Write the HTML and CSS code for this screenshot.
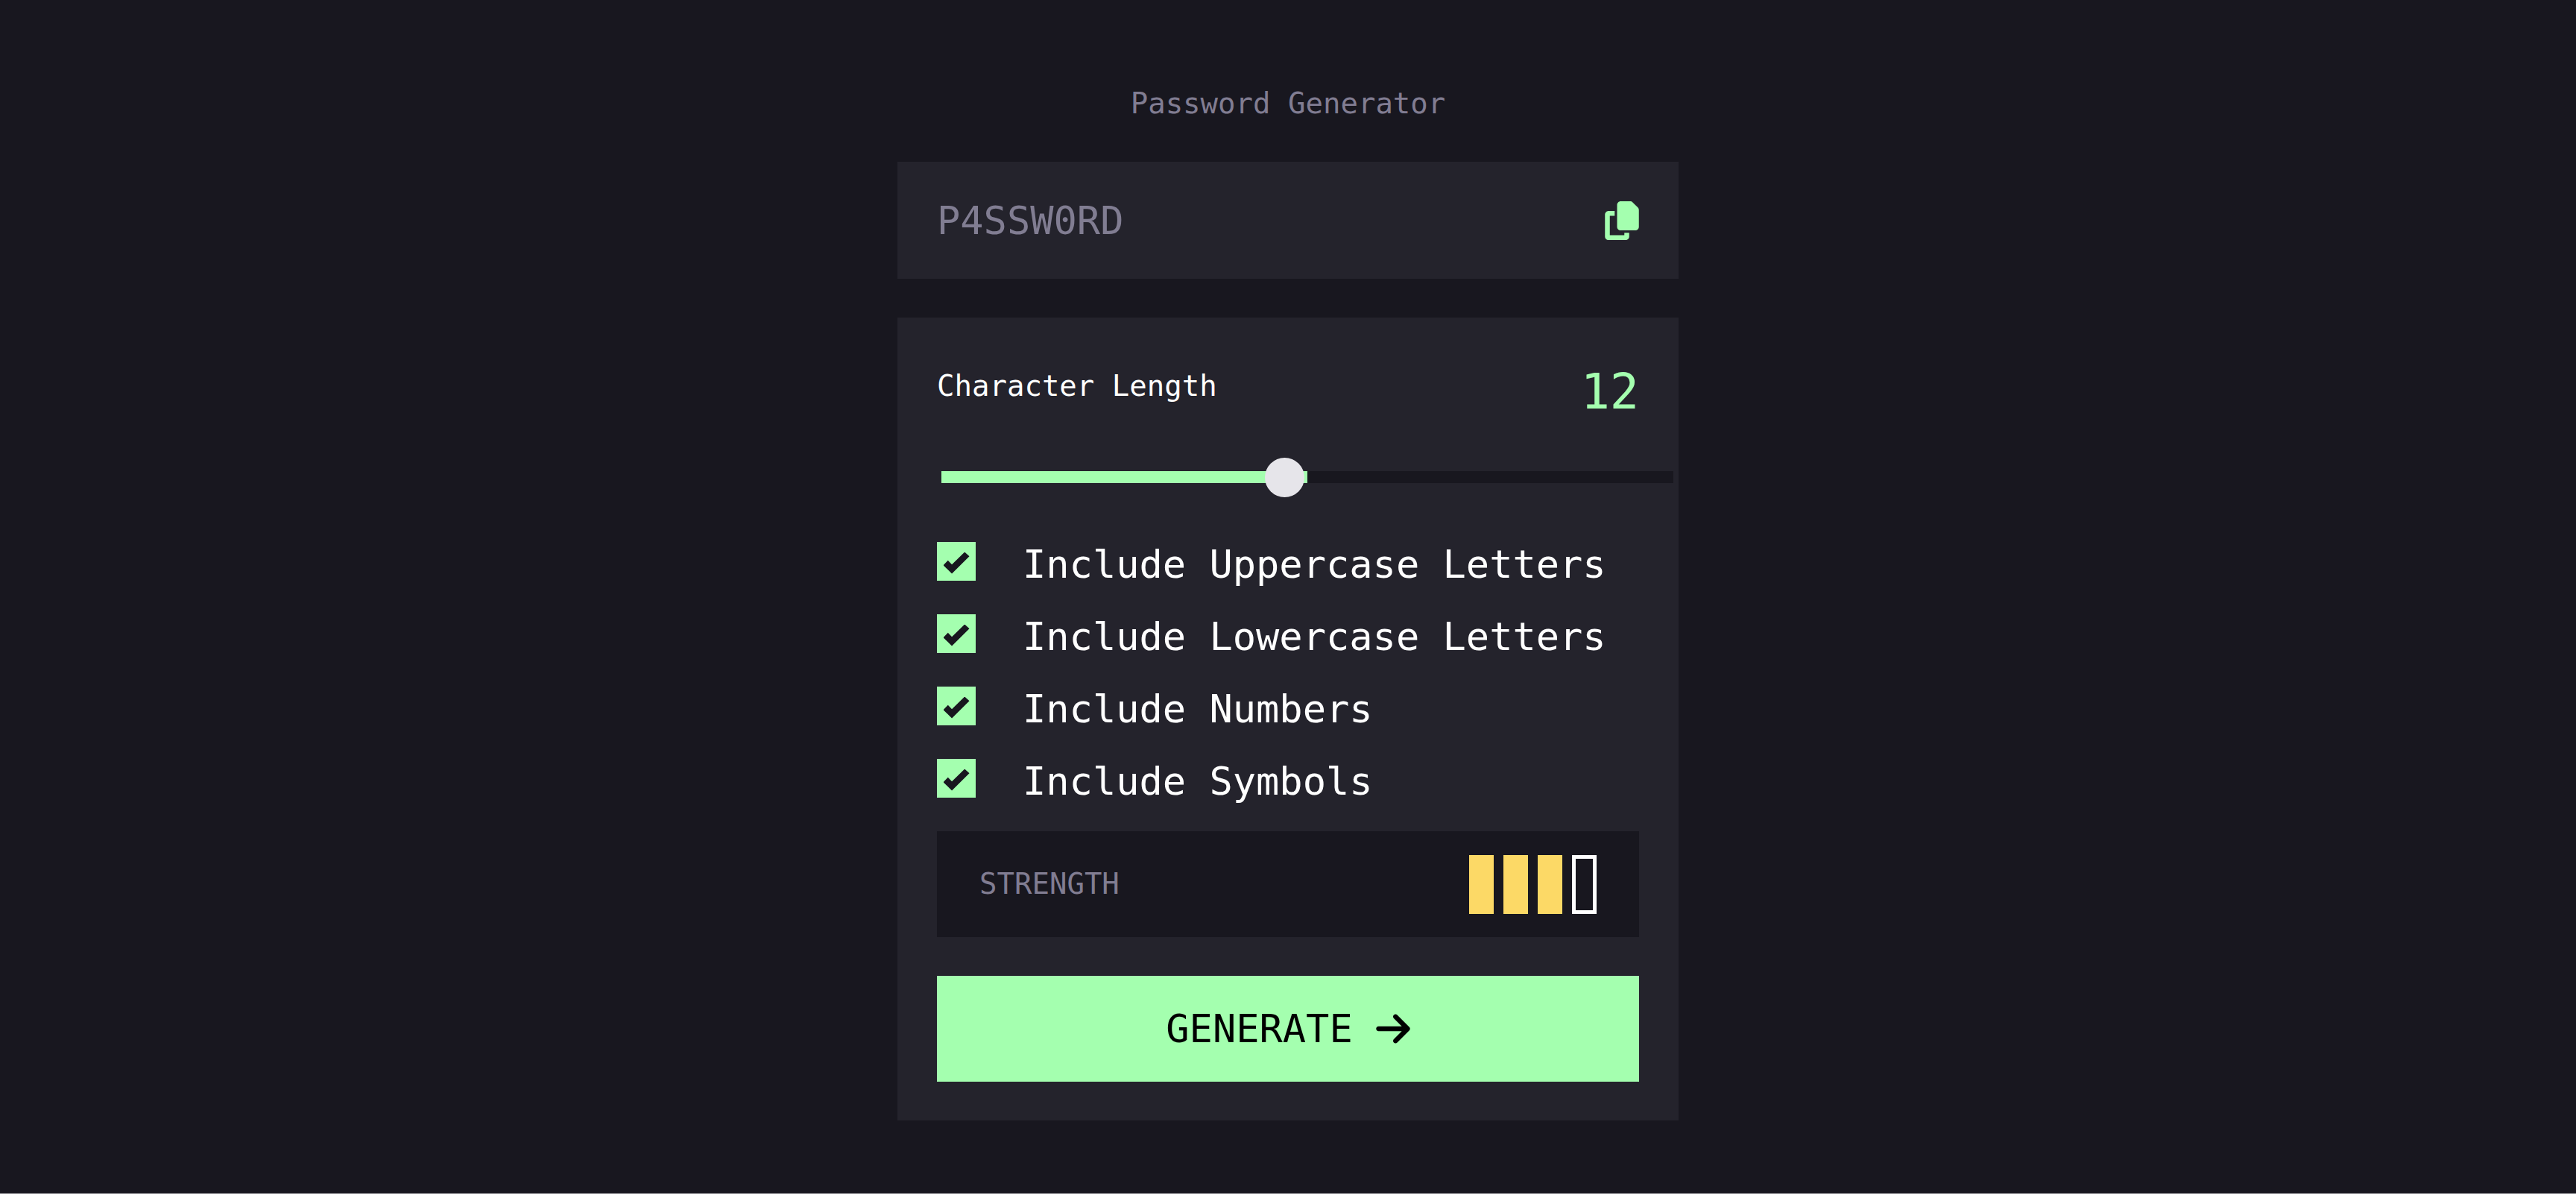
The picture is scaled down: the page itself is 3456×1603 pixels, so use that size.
FILE: index.html
```html
<!DOCTYPE html>
<html lang="en">
<head>
<meta charset="utf-8">
<meta name="viewport" content="width=device-width, initial-scale=1">
<title>Password Generator</title>
<link rel="stylesheet" href="styles.css">
</head>
<body>
<main class="page">
  <form class="generator">
    <h1 class="title">Password Generator</h1>

    <div class="output">
      <input class="output-text" type="text" placeholder="P4SSW0RD" aria-label="Generated password" readonly>
      <button class="copy" type="button" aria-label="Copy password">
        <svg class="icon" viewBox="0 0 448 512" aria-hidden="true"><path d="M208 0L332.1 0c12.7 0 24.9 5.1 33.9 14.1l67.9 67.9c9 9 14.1 21.2 14.1 33.9L448 336c0 26.5-21.5 48-48 48l-192 0c-26.5 0-48-21.5-48-48l0-288c0-26.5 21.5-48 48-48zM48 128l80 0 0 64-64 0 0 256 192 0 0-32 64 0 0 48c0 26.5-21.5 48-48 48L48 512c-26.5 0-48-21.5-48-48L0 176c0-26.5 21.5-48 48-48z"/></svg>
      </button>
    </div>

    <div class="settings">
      <div class="length">
        <label class="length-label" for="length">Character Length</label>
        <output class="length-value" for="length">12</output>
      </div>
      <input class="slider" id="length" type="range" min="5" max="20" value="12">

      <div class="options">
        <label class="option"><input class="tick" type="checkbox" checked><span>Include Uppercase Letters</span></label>
        <label class="option"><input class="tick" type="checkbox" checked><span>Include Lowercase Letters</span></label>
        <label class="option"><input class="tick" type="checkbox" checked><span>Include Numbers</span></label>
        <label class="option"><input class="tick" type="checkbox" checked><span>Include Symbols</span></label>
      </div>

      <div class="strength">
        <span class="strength-label">STRENGTH</span>
        <div class="bars">
          <span class="bar bar-on"></span>
          <span class="bar bar-on"></span>
          <span class="bar bar-on"></span>
          <span class="bar"></span>
        </div>
      </div>

      <button class="generate" type="button">
        <span>GENERATE</span>
        <svg class="icon" viewBox="0 0 448 512" aria-hidden="true"><path d="M438.6 278.6c12.5-12.5 12.5-32.8 0-45.3l-160-160c-12.5-12.5-32.8-12.5-45.3 0s-12.5 32.8 0 45.3L338.8 224 32 224c-17.7 0-32 14.3-32 32s14.3 32 32 32l306.7 0L233.4 393.4c-12.5 12.5-12.5 32.8 0 45.3s32.8 12.5 45.3 0l160-160z"/></svg>
      </button>
    </div>
  </form>
</main>
</body>
</html>
```
FILE: styles.css
```css
:root {
  --ink: #18171f;
  --panel: #24232c;
  --green: #a4ffaf;
  --grey: #817d92;
  --yellow: #fcd966;
  --pad: 53px;
}

* { box-sizing: border-box; }

body {
  margin: 0;
  background: #fff;
  color: #fff;
  font-family: "DejaVu Sans Mono", "Liberation Mono", monospace;
  font-size: 52px;
  line-height: 60px;
}

button, input { font: inherit; }

.page {
  display: flex;
  justify-content: center;
  padding: 113px 24px 98px;
  background: var(--ink);
}

.generator {
  width: 100%;
  max-width: 1048px;
}

.title {
  margin: 0 0 52px;
  color: var(--grey);
  font-size: 39px;
  font-weight: 400;
  line-height: 52px;
  text-align: center;
}

.output {
  display: flex;
  align-items: center;
  justify-content: space-between;
  margin-bottom: 52px;
  padding: 48px var(--pad);
  background: var(--panel);
}

.output-text {
  flex: 1;
  min-width: 0;
  height: 61px;
  padding: 0;
  border: 0;
  outline: 0;
  background: none;
  color: #fff;
}

.output-text::placeholder {
  color: var(--grey);
  opacity: 1;
}

.copy {
  display: flex;
  padding: 0;
  border: 0;
  background: none;
  color: var(--green);
  cursor: pointer;
}

.icon {
  width: 46px;
  height: 52px;
  fill: currentColor;
}

.settings {
  padding: 52px var(--pad);
  background: var(--panel);
}

.length {
  display: flex;
  align-items: flex-start;
  justify-content: space-between;
}

.length-label {
  padding-top: 14px;
  font-size: 39px;
  line-height: 52px;
}

.length-value {
  color: var(--green);
  font-size: 65px;
  line-height: 96px;
}

.slider {
  appearance: none;
  display: block;
  width: calc(100% + 40px);
  height: 16px;
  margin: 58px 6px 79px;
  background: linear-gradient(to right, var(--green) 50%, var(--ink) 50%);
  cursor: pointer;
}

.slider::-webkit-slider-thumb {
  appearance: none;
  width: 53px;
  height: 53px;
  border-radius: 50%;
  background: #e6e5ea;
}

.options {
  display: grid;
  gap: 37px;
  margin-bottom: 37px;
}

.option {
  display: flex;
  align-items: flex-start;
  gap: 63px;
}

.tick {
  appearance: none;
  display: grid;
  place-items: center;
  width: 52px;
  height: 52px;
  margin: 0;
  padding-top: 4px;
  background: var(--green);
}

.tick:checked::before {
  content: "";
  width: 35px;
  height: 29px;
  background: var(--ink);
  clip-path: polygon(0 61%, 18% 39%, 33% 58%, 82% 0, 100% 20%, 33% 100%);
}

.strength {
  display: flex;
  align-items: center;
  justify-content: space-between;
  min-height: 142px;
  margin-bottom: 52px;
  padding: 0 57px;
  background: var(--ink);
}

.strength-label {
  color: var(--grey);
  font-size: 39px;
  line-height: 52px;
}

.bars {
  display: flex;
  gap: 13px;
}

.bar {
  width: 33px;
  height: 79px;
  border: 5px solid #fff;
}

.bar-on {
  border-color: var(--yellow);
  background: var(--yellow);
}

.generate {
  display: flex;
  align-items: center;
  justify-content: center;
  gap: 31px;
  width: 100%;
  min-height: 142px;
  padding: 0;
  border: 0;
  background: var(--green);
  color: #000;
  cursor: pointer;
}
```
